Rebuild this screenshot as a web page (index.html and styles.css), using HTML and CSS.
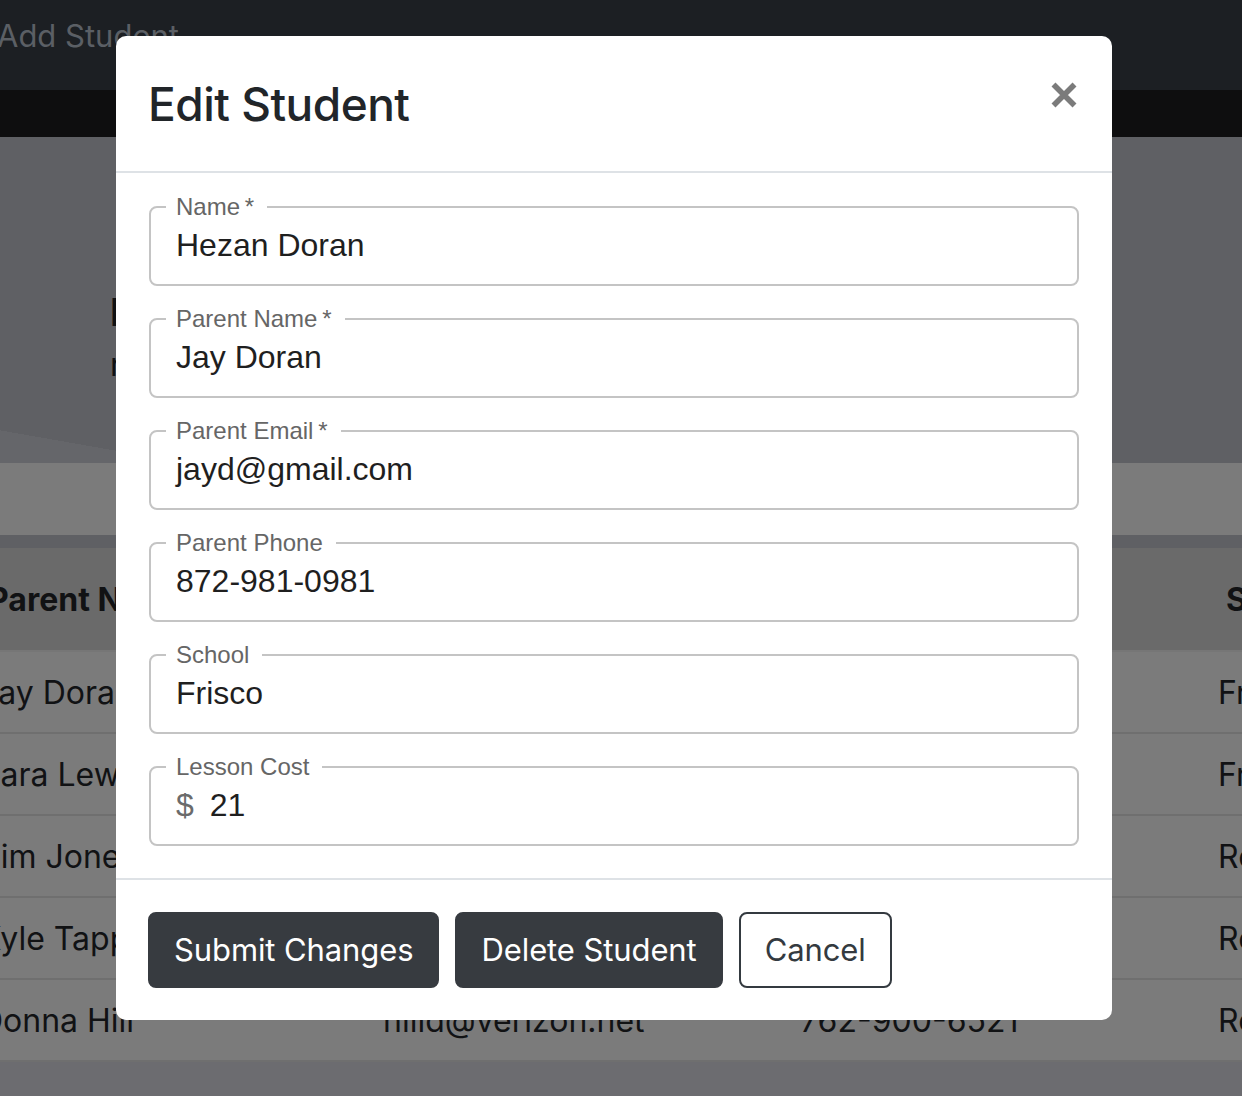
FILE: index.html
```html
<!DOCTYPE html>
<html lang="en">
<head>
<meta charset="utf-8">
<title>Edit Student</title>
<link rel="stylesheet" href="styles.css">
</head>
<body>
<div class="page">
  <nav class="navbar"><span class="brand">Add Student</span></nav>
  <div class="subbar"></div>
  <section class="hero">
    <h1 class="hero-title">Lessons</h1>
    <p class="hero-sub">roster of all students</p>
  </section>
  <div class="toolbar"></div>
  <div class="spacer"></div>
  <div class="table">
    <div class="row head"><div class="c1">Parent Name</div><div>Parent Email</div><div>Parent Phone</div><div class="c4">School</div></div>
    <div class="row"><div>Jay Doran</div><div>jayd@gmail.com</div><div>872-981-0981</div><div>Frisco</div></div>
    <div class="row"><div>Sara Lewis</div><div>saral@yahoo.com</div><div>214-555-0192</div><div>Frisco</div></div>
    <div class="row"><div>Tim Jones</div><div>timj@gmail.com</div><div>469-322-8841</div><div>Rockwall</div></div>
    <div class="row"><div>Kyle Tapp</div><div>kylet@outlook.com</div><div>972-610-4433</div><div>Rockwall</div></div>
    <div class="row"><div>Donna Hill</div><div>hilld@verizon.net</div><div>762-900-6521</div><div>Rockwall</div></div>
  </div>
  <div class="page-bottom"></div>
</div>

<div class="modal" role="dialog" aria-labelledby="modal-title">
  <div class="modal-header">
    <h2 class="modal-title" id="modal-title">Edit Student</h2>
    <button class="close" type="button" aria-label="Close">
      <svg width="26" height="26" viewBox="0 0 26 26" aria-hidden="true"><path d="M2.5 2.5L23.5 23.5M23.5 2.5L2.5 23.5" stroke="#7b7b7b" stroke-width="5.6" fill="none"/></svg>
    </button>
  </div>
  <div class="modal-body">
    <fieldset class="field"><legend>Name&thinsp;*</legend><span class="value">Hezan Doran</span></fieldset>
    <fieldset class="field"><legend>Parent Name&thinsp;*</legend><span class="value">Jay Doran</span></fieldset>
    <fieldset class="field"><legend>Parent Email&thinsp;*</legend><span class="value">jayd@gmail.com</span></fieldset>
    <fieldset class="field"><legend>Parent Phone</legend><span class="value">872-981-0981</span></fieldset>
    <fieldset class="field"><legend>School</legend><span class="value">Frisco</span></fieldset>
    <fieldset class="field"><legend>Lesson Cost</legend><span class="adorn">$</span><span class="value">21</span></fieldset>
  </div>
  <div class="modal-footer">
    <button class="btn btn-dark" type="button">Submit Changes</button>
    <button class="btn btn-dark" type="button">Delete Student</button>
    <button class="btn btn-outline" type="button">Cancel</button>
  </div>
</div>
</body>
</html>
```

FILE: styles.css
```css
html, body {
  margin: 0;
  padding: 0;
}
body {
  width: 1242px;
  height: 1096px;
  overflow: hidden;
  font-family: Inter, "Liberation Sans", sans-serif;
  background: #6c6c70;
}

/* ---------- dimmed page behind the modal ---------- */
.page {
  display: flex;
  flex-direction: column;
}
.navbar {
  height: 90px;
  background: #1c1f23;
  display: flex;
  align-items: center;
}
.brand {
  margin-left: -3px;
  margin-top: -20px;
  font-size: 31px;
  color: #5b5f65;
}
.subbar {
  height: 47px;
  background: #0e0e0f;
}
.hero {
  height: 326px;
  background: linear-gradient(190deg, #5f6064 94%, #65666a 94%);
  padding-left: 110px;
  box-sizing: border-box;
  padding-top: 150px;
}
.hero-title {
  margin: 0;
  font-size: 38px;
  font-weight: 700;
  line-height: 50px;
  color: #101113;
}
.hero-sub {
  margin: 8px 0 0;
  font-size: 32px;
  line-height: 40px;
  color: #101113;
}
.toolbar {
  height: 72px;
  background: #7b7b7b;
}
.spacer {
  height: 13px;
  background: #5f6064;
}
.table {
  margin-left: -20px;
  display: flex;
  flex-direction: column;
}
.row {
  display: grid;
  grid-template-columns: 403px 417px 418px 1fr;
  align-items: center;
  height: 82px;
  box-sizing: border-box;
  border-bottom: 2px solid #6f6f6f;
  background: #7b7b7b;
  font-size: 32px;
  color: #111214;
  white-space: nowrap;
}
.row.head {
  height: 104px;
  background: #6a6a6a;
  border-bottom: 2px solid #767676;
  font-weight: 700;
}
.row.head .c1 {
  margin-left: 8px;
}
.row.head .c4 {
  margin-left: 8px;
}
.page-bottom {
  height: 40px;
  background: #6c6c70;
}

/* ---------- modal ---------- */
.modal {
  position: absolute;
  top: 36px;
  left: 116px;
  width: 996px;
  box-sizing: border-box;
  background: #fff;
  border-radius: 10px;
  display: flex;
  flex-direction: column;
}
.modal-header {
  height: 135px;
  padding: 0 35px 0 32px;
  display: flex;
  align-items: center;
  justify-content: space-between;
  border-bottom: 2px solid #dee2e6;
}
.modal-title {
  margin: 2px 0 0;
  font-size: 46px;
  font-weight: 500;
  line-height: 1.2;
  letter-spacing: -0.5px;
  color: #212529;
}
.close {
  margin-bottom: 17px;
  padding: 0;
  border: 0;
  background: transparent;
  display: flex;
  cursor: pointer;
}
.modal-body {
  padding: 22px 33px 32px 33px;
  display: flex;
  flex-direction: column;
  gap: 21px;
}
.field {
  margin: 0;
  padding: 8px 25px 21px;
  border: 2px solid #c4c4c4;
  border-radius: 8px;
  display: flex;
  align-items: center;
  font-family: "Liberation Sans", Arial, sans-serif;
}
.field legend {
  margin-left: -10px;
  padding: 0 13px 0 10px;
  font-size: 24px;
  line-height: 24px;
  color: #666;
}
.value {
  font-size: 32px;
  line-height: 36px;
  color: #1f1f1f;
}
.adorn {
  font-size: 32px;
  line-height: 36px;
  color: #6b6b6b;
  margin-right: 16px;
}
.modal-footer {
  border-top: 2px solid #dee2e6;
  padding: 32px 32px 32px;
  display: flex;
  gap: 16px;
}
.btn {
  font-family: Inter, "Liberation Sans", sans-serif;
  font-size: 31px;
  line-height: 48px;
  letter-spacing: -0.1px;
  padding: 12px 24px;
  border-radius: 8px;
  border: 2px solid #343a40;
  cursor: pointer;
}
.btn-dark {
  background: #373b40;
  border-color: #373b40;
  color: #fff;
}
.btn-outline {
  background: #fff;
  color: #343a40;
}
```
